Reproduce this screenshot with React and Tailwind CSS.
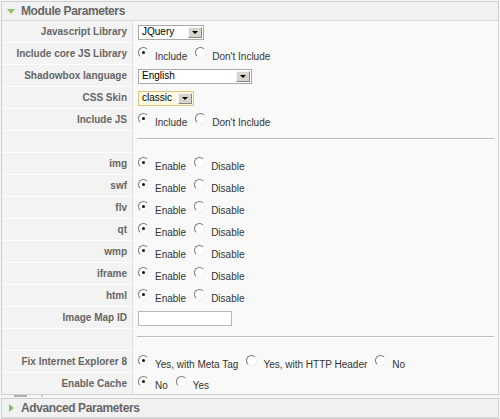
import React from 'react';

const Radio = ({ checked, label }) => (
  <label className="flex items-center mr-[8px] whitespace-nowrap">
    <span className="relative w-[11px] h-[11px] rounded-full border border-t-[#7a7a7a] border-l-[#7a7a7a] border-r-[#f0f0f0] border-b-[#f0f0f0] bg-white mr-[6px] -mt-[4px] shrink-0">
      {checked && <span className="absolute left-[3px] top-[3px] w-[3px] h-[3px] rounded-full bg-[#111]" />}
    </span>
    <span className="text-[10px] text-[#333] mt-[4px]">{label}</span>
  </label>
);

const Select = ({ value, width, focused }) => (
  <div
    className={`flex items-center h-[15px] border ${focused ? 'border-[#e3c27a] bg-[#fffce6]' : 'border-[#a8a8a8] bg-white'}`}
    style={{ width }}
  >
    <span className="flex-1 px-[3px] text-[10px] text-black leading-none">{value}</span>
    <span className="w-[14px] h-[11px] mr-[1px] bg-[#d8d4cc] border border-[#f4f4f4] border-r-[#888] border-b-[#888] flex items-center justify-center">
      <span className="w-0 h-0 border-l-[3px] border-r-[3px] border-t-[3px] border-l-transparent border-r-transparent border-t-black" />
    </span>
  </div>
);

const Label = ({ children, last }) => (
  <div className={`w-[131px] shrink-0 bg-[#f3f3f3] border-r border-[#e0e0e0] ${last ? '' : 'border-b border-b-[#fdfdfd]'} flex items-center justify-end pr-[5px] text-[10px] font-bold text-[#666] whitespace-nowrap`}>
    {children}
  </div>
);

const Row = ({ label, children, last }) => (
  <div className={`flex ${last ? 'h-[21px]' : 'h-[22px]'}`}>
    <Label last={last}>{label}</Label>
    <div className="flex-1 flex items-center pl-[5px]">{children}</div>
  </div>
);

const Sep = () => (
  <div className="flex h-[22px]">
    <Label />
    <div className="flex-1 pl-[4px] pr-[4px] pt-[7px]">
      <div className="border-t border-b border-t-[#bcbcbc] border-b-white" />
    </div>
  </div>
);

const EnableRow = ({ label }) => (
  <Row label={label}>
    <Radio checked label="Enable" />
    <Radio label="Disable" />
  </Row>
);

const Header = ({ title, open }) => (
  <div className="flex items-center h-[19px] bg-[#f1f1f1] border-b border-[#dadada] pl-[5px]">
    {open ? (
      <span className="w-0 h-0 border-l-[4px] border-r-[4px] border-t-[5px] border-l-transparent border-r-transparent border-t-[#8cbf6c] mr-[6px]" />
    ) : (
      <span className="w-0 h-0 border-t-[4px] border-b-[4px] border-l-[5px] border-t-transparent border-b-transparent border-l-[#8cbf6c] ml-[2px] mr-[7px]" />
    )}
    <span className="text-[12px] font-bold text-[#666] tracking-[-0.4px]">{title}</span>
  </div>
);

export default function App() {
  return (
    <div className="w-[500px] h-[419px] bg-[#f6f6f6] overflow-hidden" style={{ fontFamily: '"Liberation Sans", Arial, sans-serif' }}>
      <div className="mx-[1px] mt-[1px] border border-[#cfcfcf] bg-[#f9f9f9]">
        <Header title="Module Parameters" open />
        <Row label="Javascript Library">
          <Select value="JQuery" width={66} />
        </Row>
        <Row label="Include core JS Library">
          <Radio checked label="Include" />
          <Radio label="Don't Include" />
        </Row>
        <Row label="Shadowbox language">
          <Select value="English" width={114} />
        </Row>
        <Row label="CSS Skin">
          <Select value="classic" width={56} focused />
        </Row>
        <Row label="Include JS">
          <Radio checked label="Include" />
          <Radio label="Don't Include" />
        </Row>
        <Sep />
        <EnableRow label="img" />
        <EnableRow label="swf" />
        <EnableRow label="flv" />
        <EnableRow label="qt" />
        <EnableRow label="wmp" />
        <EnableRow label="iframe" />
        <EnableRow label="html" />
        <Row label="Image Map ID">
          <div className="w-[94px] h-[15px] border border-[#b8b8b8] bg-white" />
        </Row>
        <Sep />
        <Row label="Fix Internet Explorer 8">
          <Radio checked label="Yes, with Meta Tag" />
          <Radio label="Yes, with HTTP Header" />
          <Radio label="No" />
        </Row>
        <Row label="Enable Cache" last>
          <Radio checked label="No" />
          <Radio label="Yes" />
        </Row>
      </div>
      <div className="flex h-[3px] items-start pl-[14px]">
        <div className="w-[13px] h-[2px] bg-[#b0b0b0]" />
        <div className="w-[2px] h-[2px] ml-[14px] bg-[#c8c8c8]" />
      </div>
      <div className="mx-[1px] border border-[#cfcfcf]">
        <Header title="Advanced Parameters" />
      </div>
    </div>
  );
}
